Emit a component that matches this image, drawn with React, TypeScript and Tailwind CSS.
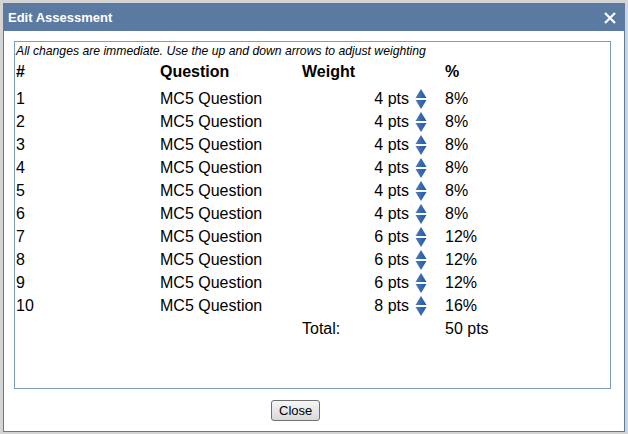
import React from 'react'

const rows = [
  { n: 1, pts: 4, pct: 8 },
  { n: 2, pts: 4, pct: 8 },
  { n: 3, pts: 4, pct: 8 },
  { n: 4, pts: 4, pct: 8 },
  { n: 5, pts: 4, pct: 8 },
  { n: 6, pts: 4, pct: 8 },
  { n: 7, pts: 6, pct: 12 },
  { n: 8, pts: 6, pct: 12 },
  { n: 9, pts: 6, pct: 12 },
  { n: 10, pts: 8, pct: 16 },
]

function Arrows() {
  return (
    <svg width="12" height="22" viewBox="0 0 12 22" className="block">
      <defs>
        <linearGradient id="ag" x1="0" y1="0" x2="1" y2="0">
          <stop offset="0" stopColor="#4a7cc4" />
          <stop offset="1" stopColor="#24569e" />
        </linearGradient>
      </defs>
      <path d="M6 1 L11.5 10 L0.5 10 Z" fill="url(#ag)" />
      <path d="M0.5 12 L11.5 12 L6 21 Z" fill="url(#ag)" />
    </svg>
  )
}

export default function App() {
  return (
    <div className="w-[628px] h-[434px] overflow-hidden bg-[#d4d4d4] pt-[3px] pl-[3px] font-['Liberation_Sans',Arial,sans-serif] text-black">
      <div className="w-[622px] h-[429px] border border-[#5b7aa1] bg-white flex flex-col">
        <div className="h-[27px] bg-[#5b7aa1] flex items-center justify-between pl-[4px] pr-[8px]">
          <span className="text-white font-bold text-[13px] leading-none">Edit Assessment</span>
          <svg width="12" height="12" viewBox="0 0 12 12">
            <path d="M1 1 L11 11 M11 1 L1 11" stroke="#fff" strokeWidth="2.2" />
          </svg>
        </div>
        <div className="mt-[10px] ml-[10px] w-[597px] h-[348px] border border-[#7f9db9] px-[1px] pt-[2px]">
          <div className="text-[12.2px] italic leading-[14px] whitespace-nowrap">
            All changes are immediate. Use the up and down arrows to adjust weighting
          </div>
          <div className="grid grid-cols-[144px_142px_143px_1fr] text-[16px] leading-[23px] mt-[2px]">
            <div className="font-bold">#</div>
            <div className="font-bold">Question</div>
            <div className="font-bold">Weight</div>
            <div className="font-bold">%</div>
          </div>
          <div className="mt-[4px]">
            {rows.map((r) => (
              <div key={r.n} className="grid grid-cols-[144px_142px_143px_1fr] text-[16px] leading-[23px] h-[23px]">
                <div>{r.n}</div>
                <div>MC5 Question</div>
                <div className="flex items-center justify-end gap-[6px] pr-[18px]">
                  <span>{r.pts} pts</span>
                  <Arrows />
                </div>
                <div>{r.pct}%</div>
              </div>
            ))}
            <div className="grid grid-cols-[144px_142px_143px_1fr] text-[16px] leading-[23px] h-[23px]">
              <div />
              <div />
              <div>Total:</div>
              <div>50 pts</div>
            </div>
          </div>
        </div>
        <div className="mt-[9px] pl-[267px]">
          <button className="h-[21px] px-[7px] border border-[#707070] rounded-[3px] bg-gradient-to-b from-[#f6f6f6] to-[#d9d9d9] text-[13px] leading-none font-['Liberation_Sans',Arial,sans-serif]">
            Close
          </button>
        </div>
      </div>
    </div>
  )
}
